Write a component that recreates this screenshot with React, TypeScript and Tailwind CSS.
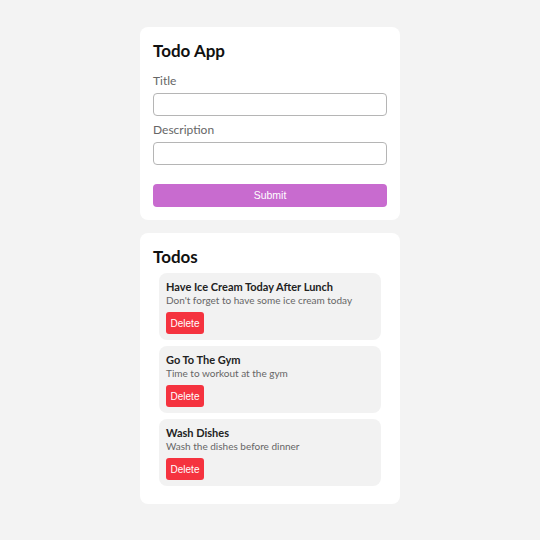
const todos = [
	{ id: 1, title: "Have Ice Cream Today After Lunch", description: "Don't forget to have some ice cream today" },
	{ id: 2, title: "Go To The Gym", description: "Time to workout at the gym" },
	{ id: 3, title: "Wash Dishes", description: "Wash the dishes before dinner" },
];

const sans = "font-['Lato','Open_Sans',sans-serif]";

export default function App() {
	return (
		<div className={`min-h-[540px] w-[540px] bg-[#f3f3f3] pt-[27px] ${sans}`}>
			<div className="mx-auto flex w-[260px] flex-col gap-[13px]">
				<form
					className="rounded-lg bg-white px-[13px] pt-[13px] pb-[13px]"
					onSubmit={(e) => e.preventDefault()}
				>
					<h1 className="text-[17px] leading-[22px] font-bold text-[#111]">Todo App</h1>
					<label className="mt-[11px] block text-[12px] leading-[16px] text-[#666]">Title</label>
					<input className="mt-[4px] block h-[23px] w-[234px] rounded-[4px] border border-[#b5b5b5] bg-white" />
					<label className="mt-[6px] block text-[12px] leading-[16px] text-[#666]">Description</label>
					<input className="mt-[4px] block h-[23px] w-[234px] rounded-[4px] border border-[#b5b5b5] bg-white" />
					<button
						type="submit"
						className="mt-[19px] block h-[23px] w-[234px] rounded-[4px] bg-[#c86bcf] font-['Liberation_Sans',Arial,sans-serif] text-[10.5px] text-white"
					>
						Submit
					</button>
				</form>
				<div className="rounded-lg bg-white px-[13px] pt-[13px] pb-[18px]">
					<h2 className="text-[17px] leading-[22px] font-bold text-[#111]">Todos</h2>
					<div className="mt-[5px] flex flex-col gap-[6px] px-[6px]">
						{todos.map((todo) => (
							<div key={todo.id} className="rounded-lg bg-[#f2f2f2] px-[7px] pt-[7px] pb-[6px]">
								<h3 className="text-[11px] leading-[14px] font-bold text-[#222]">{todo.title}</h3>
								<p className="text-[10px] leading-[12px] text-[#666]">{todo.description}</p>
								<button className="mt-[6px] block h-[22px] w-[38px] rounded-[3px] bg-[#f5333f] font-['Liberation_Sans',Arial,sans-serif] text-[10px] text-white">
									Delete
								</button>
							</div>
						))}
					</div>
				</div>
			</div>
		</div>
	);
}
